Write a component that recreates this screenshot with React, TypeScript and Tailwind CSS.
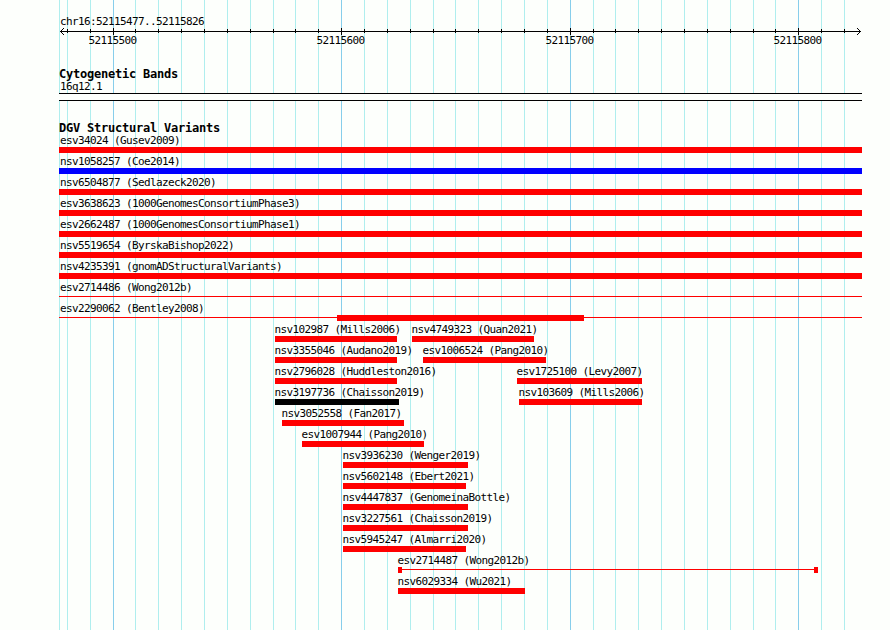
import { clsx } from 'clsx'

type Feature = {
  name: string
  start: number
  end: number
  color?: 'red' | 'blue' | 'black'
  // solid blocks drawn on top of a thin connector line
  blocks?: [number, number][]
}

const LEFT = 59
const RIGHT = 862

const majorLines = [
  { x: 113, label: '52115500' },
  { x: 341, label: '52115600' },
  { x: 570, label: '52115700' },
  { x: 798, label: '52115800' }
]

const minorLines = [
  67, 90, 135, 158, 181, 204, 227, 250, 273, 295, 318, 364, 387, 410, 433, 455, 478, 501,
  524, 547, 593, 615, 638, 661, 684, 707, 730, 753, 775, 821, 844
]

const rows: Feature[][] = [
  [{ name: 'esv34024 (Gusev2009)', start: 59, end: 862 }],
  [{ name: 'nsv1058257 (Coe2014)', start: 59, end: 862, color: 'blue' }],
  [{ name: 'nsv6504877 (Sedlazeck2020)', start: 59, end: 862 }],
  [{ name: 'esv3638623 (1000GenomesConsortiumPhase3)', start: 59, end: 862 }],
  [{ name: 'esv2662487 (1000GenomesConsortiumPhase1)', start: 59, end: 862 }],
  [{ name: 'nsv5519654 (ByrskaBishop2022)', start: 59, end: 862 }],
  [{ name: 'nsv4235391 (gnomADStructuralVariants)', start: 59, end: 862 }],
  [{ name: 'esv2714486 (Wong2012b)', start: 59, end: 862, blocks: [] }],
  [{ name: 'esv2290062 (Bentley2008)', start: 59, end: 862, blocks: [[337, 584]] }],
  [
    { name: 'nsv102987 (Mills2006)', start: 275, end: 397 },
    { name: 'nsv4749323 (Quan2021)', start: 412, end: 534 }
  ],
  [
    { name: 'nsv3355046 (Audano2019)', start: 275, end: 397 },
    { name: 'esv1006524 (Pang2010)', start: 423, end: 546 }
  ],
  [
    { name: 'nsv2796028 (Huddleston2016)', start: 275, end: 397 },
    { name: 'esv1725100 (Levy2007)', start: 517, end: 642 }
  ],
  [
    { name: 'nsv3197736 (Chaisson2019)', start: 275, end: 399, color: 'black' },
    { name: 'nsv103609 (Mills2006)', start: 519, end: 642 }
  ],
  [{ name: 'nsv3052558 (Fan2017)', start: 282, end: 404 }],
  [{ name: 'esv1007944 (Pang2010)', start: 302, end: 424 }],
  [{ name: 'nsv3936230 (Wenger2019)', start: 343, end: 468 }],
  [{ name: 'nsv5602148 (Ebert2021)', start: 343, end: 466 }],
  [{ name: 'nsv4447837 (GenomeinaBottle)', start: 343, end: 468 }],
  [{ name: 'nsv3227561 (Chaisson2019)', start: 343, end: 468 }],
  [{ name: 'nsv5945247 (Almarri2020)', start: 343, end: 466 }],
  [{ name: 'esv2714487 (Wong2012b)', start: 398, end: 818, blocks: [[398, 402], [814, 818]] }],
  [{ name: 'nsv6029334 (Wu2021)', start: 398, end: 525 }]
]

function GridLines() {
  return (
    <svg className="absolute inset-0" width="890" height="630" shapeRendering="crispEdges">
      {[LEFT, ...minorLines].map(x => (
        <rect key={x} x={x} y="0" width="1" height="630" fill="#afeeee" />
      ))}
      {majorLines.map(({ x }) => (
        <rect key={x} x={x} y="0" width="1" height="630" fill="#87ceeb" />
      ))}
    </svg>
  )
}

function Ruler() {
  return (
    <div>
      <svg className="block" width="890" height="7" shapeRendering="crispEdges">
        <rect x="60" y="3" width="801" height="1" />
        {[0, 1, 2, 3].map(i => (
          <g key={i}>
            <rect x={60 + i} y={3 - i} width="1" height="1" />
            <rect x={60 + i} y={3 + i} width="1" height="1" />
            <rect x={860 - i} y={3 - i} width="1" height="1" />
            <rect x={860 - i} y={3 + i} width="1" height="1" />
          </g>
        ))}
        {minorLines.map(x => (
          <rect key={x} x={x} y="1" width="1" height="4" />
        ))}
        {majorLines.map(({ x }) => (
          <rect key={x} x={x} y="0" width="1" height="7" />
        ))}
      </svg>
      <div className="flex h-[10px] leading-[12px]">
        {majorLines.map(({ x, label }, i) => (
          <span
            key={x}
            className="w-12 shrink-0"
            style={{ marginLeft: x - 24.5 - (i === 0 ? 0 : majorLines[i - 1].x + 23.5) }}
          >
            {label}
          </span>
        ))}
      </div>
    </div>
  )
}

function FeatureBar({ feature }: { feature: Feature }) {
  const { start, end, color = 'red', blocks } = feature
  if (!blocks) {
    return (
      <div
        className={clsx(
          'h-[6px]',
          color === 'red' && 'bg-[#ff0000]',
          color === 'blue' && 'bg-[#0000ff]',
          color === 'black' && 'bg-black'
        )}
        style={{ width: end - start }}
      />
    )
  }
  return (
    <svg className="block" width={end - start} height="6" shapeRendering="crispEdges">
      <rect x="0" y="2" width={end - start} height="1" fill="#ff0000" />
      {blocks.map(([from, to]) => (
        <rect key={from} x={from - start} y="0" width={to - from} height="6" fill="#ff0000" />
      ))}
    </svg>
  )
}

function TrackRow({ features }: { features: Feature[] }) {
  return (
    <div className="flex h-[21px]">
      {features.map((feature, i) => (
        <div
          key={feature.name}
          className="shrink-0"
          style={{
            width: feature.end - feature.start,
            marginLeft: feature.start - (i === 0 ? 0 : features[i - 1].end)
          }}
        >
          <div className={clsx('h-[14px] leading-[16px]', feature.start === LEFT ? 'ml-px' : '-ml-[0.5px]')}>
            {feature.name}
          </div>
          <FeatureBar feature={feature} />
        </div>
      ))}
    </div>
  )
}

function TrackTitle({ children }: { children: string }) {
  return <h2 className="pl-[59px] text-[12px] font-bold tracking-[-0.224px]">{children}</h2>
}

export default function App() {
  return (
    <div className="relative h-[630px] w-[890px] overflow-hidden bg-[#fdfffc] font-['DejaVu_Sans_Mono','Liberation_Mono',monospace] text-[11px] tracking-[-0.622px] whitespace-nowrap text-black">
      <GridLines />
      <main className="relative pt-[14px]">
        <div className="h-[14px] pl-[60px] leading-[16px]">chr16:52115477..52115826</div>
        <Ruler />

        <section className="mt-[23px]">
          <div className="h-[12px] leading-[13px]">
            <TrackTitle>Cytogenetic Bands</TrackTitle>
          </div>
          <div className="h-[13px] pl-[60px] leading-[13px]">16q12.1</div>
          <div
            className="ml-[59px] h-[8px] border-y border-black bg-[#fdfffc]"
            style={{ width: RIGHT - LEFT }}
          />
        </section>

        <section className="mt-[21px]">
          <div className="h-[11px] leading-[13px]">
            <TrackTitle>DGV Structural Variants</TrackTitle>
          </div>
          {rows.map(features => (
            <TrackRow key={features[0].name} features={features} />
          ))}
        </section>
      </main>
    </div>
  )
}
